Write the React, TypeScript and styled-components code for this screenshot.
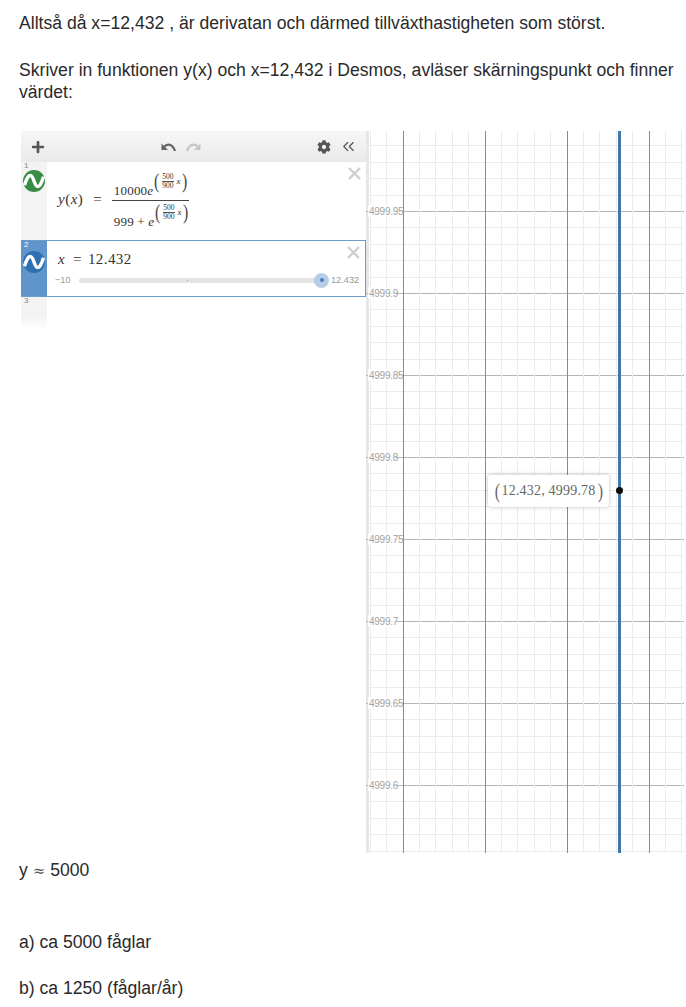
import React from 'react';
import styled, { createGlobalStyle } from 'styled-components';
import { FaCog, FaPlus } from 'react-icons/fa';
import { LuChevronsLeft } from 'react-icons/lu';

const GlobalStyle = createGlobalStyle`
  html, body { margin: 0; padding: 0; background: #fff; }
  body { font-family: "Liberation Sans", Arial, sans-serif; font-size: 17.6px; color: #2a2a2a; }
`;

const Page = styled.div`
  width: 686px;
  height: 1007px;
  overflow: hidden;
  box-sizing: border-box;
  padding-top: 12px;
`;

const Para = styled.p<{ $top?: number }>`
  margin: ${p => p.$top ?? 0}px 0 0 19px;
  width: 660px;
  line-height: 22px;
`;

const Approx = styled.span`
  font-family: "DejaVu Serif", serif;
  font-size: 15px;
  color: #555;
`;

const Desmos = styled.div`
  display: flex;
  margin: 28px 0 6px 21px;
  width: 663px;
  height: 722px;
`;

const ListPanel = styled.div`
  width: 345px;
  flex: none;
  display: flex;
  flex-direction: column;
`;

const Toolbar = styled.div`
  height: 31px;
  flex: none;
  display: flex;
  align-items: center;
  justify-content: space-between;
  padding: 0 8px 0 10px;
  background: linear-gradient(#f7f7f7, #e9e9e9);
  color: #555;
`;

const ToolGroup = styled.div<{ $gap: number }>`
  display: flex;
  align-items: center;
  gap: ${p => p.$gap}px;
`;

const HistoryIcon = styled.svg<{ $redo?: boolean }>`
  width: 15px;
  height: 10px;
  color: ${p => (p.$redo ? '#c6c6c6' : '#666')};
  transform: ${p => (p.$redo ? 'scaleX(-1)' : 'none')};
`;

const Row = styled.div<{ $height: number; $active?: boolean }>`
  position: relative;
  height: ${p => p.$height}px;
  flex: none;
  display: flex;
  box-sizing: border-box;
  border: ${p => (p.$active ? '1px solid #6d9cc6' : '0')};
  border-left: 0;
`;

const Gutter = styled.div<{ $active?: boolean }>`
  width: 26px;
  flex: none;
  display: flex;
  flex-direction: column;
  align-items: center;
  background: ${p => (p.$active ? '#5f95cb' : '#f3f3f3')};
`;

const FadingGutter = styled(Gutter)`
  background: linear-gradient(#f3f3f3 60%, #fff);
`;

const RowNumber = styled.span<{ $active?: boolean }>`
  align-self: flex-start;
  margin: 0 0 0 3px;
  font-size: 8px;
  line-height: 8px;
  color: ${p => (p.$active ? '#fff' : '#888')};
`;

const WaveBadge = styled.svg<{ $top: number }>`
  width: 22px;
  height: 22px;
  margin-top: ${p => p.$top}px;
`;

const Close = styled.svg`
  position: absolute;
  top: 5px;
  right: 5px;
  width: 13px;
  height: 13px;
`;

const Body = styled.div`
  flex: 1;
  min-width: 0;
`;

const Expression = styled.div`
  display: flex;
  align-items: flex-start;
  padding: 10px 0 0 11px;
  font-family: "Liberation Serif", serif;
  font-size: 15px;
  color: #333;
`;

const Lhs = styled.span`
  margin-top: 19px;
  letter-spacing: 0.5px;
`;

const Var = styled.i`
  font-style: italic;
`;

const Equals = styled.span`
  margin: 19px 10px 0 10px;
`;

const Frac = styled.span`
  display: inline-flex;
  flex-direction: column;
  align-items: flex-start;
`;

const FracTop = styled.span`
  display: flex;
  align-items: flex-end;
  padding: 0 1px 2px 2px;
  border-bottom: 1px solid #444;
`;

const FracBottom = styled.span`
  display: flex;
  align-items: flex-end;
  padding: 2px 1px 0 2px;
`;

const Base = styled.span`
  font-size: 13px;
  line-height: 15px;
  letter-spacing: 0.2px;
`;

const Power = styled.span`
  display: inline-flex;
  align-items: center;
  margin-bottom: 8px;
  font-size: 9px;
  height: 18px;
`;

const Paren = styled.span`
  font-size: 21px;
  line-height: 18px;
  font-weight: 400;
  transform: scaleX(0.75);
  color: #444;
`;

const MiniFrac = styled.span`
  display: inline-flex;
  flex-direction: column;
  align-items: center;
  font-size: 7.5px;
  line-height: 8px;
  margin: 0 3px 0 2px;
  & > span:first-child { border-bottom: 1px solid #555; }
`;

const SliderExpression = styled.div`
  height: 32px;
  display: flex;
  align-items: flex-end;
  padding: 0 0 5px 11px;
  box-sizing: border-box;
  font-family: "Liberation Serif", serif;
  font-size: 15px;
  letter-spacing: 0.4px;
  color: #333;
`;

const SliderEquals = styled.span`
  margin: 0 6px 0 8px;
`;

const SliderRow = styled.div`
  display: flex;
  align-items: center;
  height: 14px;
  padding-left: 8px;
  font-size: 9.2px;
  color: #999;
`;

const SliderMin = styled.span`
  width: 24px;
  flex: none;
`;

const Track = styled.div`
  position: relative;
  width: 243px;
  height: 5px;
  flex: none;
  border-radius: 3px;
  background: #e4e4e4;
`;

const Tick = styled.div`
  position: absolute;
  left: 108px;
  top: 2px;
  width: 1px;
  height: 1px;
  background: #999;
`;

const Thumb = styled.div`
  position: absolute;
  right: -7px;
  top: -5px;
  width: 15px;
  height: 15px;
  border-radius: 50%;
  background: #b7cce6;
  display: flex;
  align-items: center;
  justify-content: center;
  &::after {
    content: '';
    width: 4px;
    height: 4px;
    border-radius: 50%;
    background: #4a7dbd;
  }
`;

const SliderMax = styled.span`
  margin-left: 9px;
`;

const Graph = styled.div`
  position: relative;
  flex: 1;
`;

const GridSvg = styled.svg`
  display: block;
  width: 318px;
  height: 722px;
`;

const AxisLabel = styled.text`
  font-family: "Liberation Sans", Arial, sans-serif;
  font-size: 10px;
  letter-spacing: -0.25px;
  fill: #a3a3a3;
  dominant-baseline: central;
`;

const PointLabel = styled.div`
  position: absolute;
  left: 122px;
  top: 344px;
  width: 121px;
  height: 32px;
  box-sizing: border-box;
  display: flex;
  align-items: center;
  justify-content: center;
  gap: 1px;
  background: #fff;
  border-radius: 3px;
  box-shadow: 0 0 4px rgba(0, 0, 0, 0.25);
  font-family: "Liberation Serif", serif;
  font-size: 14px;
  letter-spacing: 0.2px;
  color: #666;
`;

const LabelParen = styled.span`
  font-size: 20px;
  line-height: 20px;
  font-weight: 400;
  transform: scaleX(0.8);
`;

const History = ({ redo }: { redo?: boolean }) => (
  <HistoryIcon viewBox="0 0 15 10" $redo={redo}>
    <path d="M0.5 1.5 L0.5 8 L7 8 Z" fill="currentColor" />
    <path d="M3 5 C6 1.5 11.5 1.5 14 9" fill="none" stroke="currentColor" strokeWidth="2.2" />
  </HistoryIcon>
);

const Wave = ({ color, top }: { color: string; top: number }) => (
  <WaveBadge viewBox="0 0 23 23" $top={top}>
    <circle cx="11.5" cy="11.5" r="11.5" fill={color} />
    <path d="M1.5 16 C4 8 6 5 8.5 6 C11 7 12 16 14.5 17 C17 18 19 15 21.5 7" fill="none" stroke="#fff" strokeWidth="3.6" />
  </WaveBadge>
);

const CloseIcon = () => (
  <Close viewBox="0 0 13 13">
    <path d="M1 1 L12 12 M12 1 L1 12" stroke="#cfcfcf" strokeWidth="2.4" />
  </Close>
);

const Exponent = () => (
  <Power>
    <Paren>(</Paren>
    <MiniFrac><span>500</span><span>900</span></MiniFrac>
    <Var>x</Var>
    <Paren>)</Paren>
  </Power>
);

const STEP = 16.4;
const LEFT = 366;
const TOP = 131;
const WIDTH = 318;
const HEIGHT = 722;

const range = (start: number, end: number) => {
  const out: number[] = [];
  for (let i = 0; start + i * STEP < end; i++) out.push(start + i * STEP);
  return out;
};

const vLines = range(369.7, LEFT + WIDTH);
const hLines = range(145.4, TOP + HEIGHT);
const labels = ['4999.95', '4999.9', '4999.85', '4999.8', '4999.75', '4999.7', '4999.65', '4999.6'];

const GridChart = () => (
  <GridSvg viewBox={`0 0 ${WIDTH} ${HEIGHT}`}>
    <rect x="0" y="0" width="3" height={HEIGHT} fill="#e6e6e6" />
    {hLines.map((y, i) => (
      <line
        key={y}
        x1="0"
        x2={WIDTH}
        y1={Math.round(y - TOP) + 0.5}
        y2={Math.round(y - TOP) + 0.5}
        stroke={(i - 4) % 5 === 0 ? '#b4b4b4' : '#ececec'}
      />
    ))}
    {vLines.map((x, i) => (
      <line
        key={x}
        y1="0"
        y2={HEIGHT}
        x1={Math.round(x - LEFT) + 0.5}
        x2={Math.round(x - LEFT) + 0.5}
        stroke={(i - 2) % 5 === 0 ? '#8a8a8a' : '#ececec'}
      />
    ))}
    {labels.map((t, i) => {
      const y = 80 + i * 82;
      return (
        <g key={t}>
          <rect x="2" y={y - 6} width={t.length === 7 ? 34 : 28} height="12" fill="#fff" fillOpacity="0.85" />
          <AxisLabel x="3" y={y}>{t}</AxisLabel>
        </g>
      );
    })}
    <rect x="252" y="0" width="3" height={HEIGHT} fill="#3f77a9" />
    <circle cx="253.5" cy="359.5" r="3.5" fill="#0d0d0d" />
  </GridSvg>
);

export default function App() {
  return (
    <>
      <GlobalStyle />
      <Page>
        <Para>Alltså då x=12,432 , är derivatan och därmed tillväxthastigheten som störst.</Para>
        <Para $top={25}>Skriver in funktionen y(x) och x=12,432 i Desmos, avläser skärningspunkt och finner värdet:</Para>
        <Desmos>
          <ListPanel>
            <Toolbar>
              <FaPlus size={14} />
              <ToolGroup $gap={10}>
                <History />
                <History redo />
              </ToolGroup>
              <ToolGroup $gap={8}>
                <FaCog size={14} />
                <LuChevronsLeft size={19} strokeWidth={1.5} />
              </ToolGroup>
            </Toolbar>
            <Row $height={78}>
              <Gutter>
                <RowNumber>1</RowNumber>
                <Wave color="#388c46" top={0} />
              </Gutter>
              <Body>
                <Expression>
                  <Lhs><Var>y</Var>(<Var>x</Var>)</Lhs>
                  <Equals>=</Equals>
                  <Frac>
                    <FracTop>
                      <Base>10000<Var>e</Var></Base>
                      <Exponent />
                    </FracTop>
                    <FracBottom>
                      <Base>999 + <Var>e</Var></Base>
                      <Exponent />
                    </FracBottom>
                  </Frac>
                </Expression>
              </Body>
              <CloseIcon />
            </Row>
            <Row $height={57} $active>
              <Gutter $active>
                <RowNumber $active>2</RowNumber>
                <Wave color="#2d70b3" top={2} />
              </Gutter>
              <Body>
                <SliderExpression>
                  <Var>x</Var><SliderEquals>=</SliderEquals>12.432
                </SliderExpression>
                <SliderRow>
                  <SliderMin>−10</SliderMin>
                  <Track>
                    <Tick />
                    <Thumb />
                  </Track>
                  <SliderMax>12.432</SliderMax>
                </SliderRow>
              </Body>
              <CloseIcon />
            </Row>
            <Row $height={33}>
              <FadingGutter>
                <RowNumber>3</RowNumber>
              </FadingGutter>
            </Row>
          </ListPanel>
          <Graph>
            <GridChart />
            <PointLabel>
              <LabelParen>(</LabelParen>12.432, 4999.78<LabelParen>)</LabelParen>
            </PointLabel>
          </Graph>
        </Desmos>
        <Para>y <Approx>≈</Approx> 5000</Para>
        <Para $top={49}>a) ca 5000 fåglar</Para>
        <Para $top={24}>b) ca 1250 (fåglar/år)</Para>
      </Page>
    </>
  );
}
